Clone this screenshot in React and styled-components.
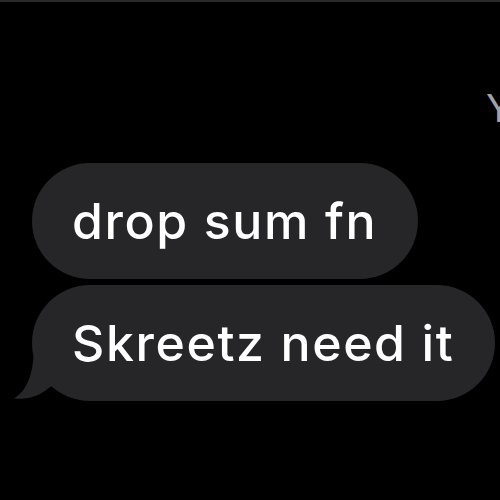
import React from 'react';
import styled, { createGlobalStyle } from 'styled-components';

const GlobalStyle = createGlobalStyle`
  html, body {
    margin: 0;
    padding: 0;
    background: #000;
  }
`;

const Screen = styled.div`
  width: 500px;
  height: 500px;
  box-sizing: border-box;
  background: #000;
  border-top: 2px solid #2a2a2c;
  overflow: hidden;
  display: flex;
  flex-direction: column;
  font-family: Inter, "Liberation Sans", sans-serif;
`;

const SenderRow = styled.div`
  margin-top: 84px;
  padding-left: 486px;
  white-space: nowrap;
  color: #a2a2a6;
  font-size: 38px;
  line-height: 44px;
`;

const Thread = styled.div`
  margin-top: 33px;
  padding-left: 32px;
  display: flex;
  flex-direction: column;
  align-items: flex-start;
  gap: 6px;
`;

const Bubble = styled.div`
  position: relative;
  box-sizing: border-box;
  height: 116px;
  padding: 0 ${p => p.$padRight}px 0 40px;
  border-radius: 58px;
  background: #262629;
  color: #fff;
  font-size: 50px;
  font-weight: 500;
  letter-spacing: 1.6px;
  display: flex;
  align-items: center;
  white-space: nowrap;
`;

const Tail = styled.svg`
  position: absolute;
  left: -20px;
  top: 56px;
  width: 60px;
  height: 62px;
`;

const messages = [
  { text: 'drop sum fn', padRight: 41 },
  { text: 'Skreetz need it', padRight: 41, tail: true },
];

const App = () => {
  return (
    <>
      <GlobalStyle />
      <Screen>
        <SenderRow>Y</SenderRow>
        <Thread>
          {messages.map((m, i) => (
            <Bubble key={i} $padRight={m.padRight}>
              {m.tail && (
                <Tail viewBox="0 0 60 62">
                  <path
                    d="M22 2 C22 36 14 50 2 57.5 C16 59 28 55 38 46 L50 40 L36 2 Z"
                    fill="#262629"
                  />
                </Tail>
              )}
              {m.text}
            </Bubble>
          ))}
        </Thread>
      </Screen>
    </>
  );
};

export default App;
